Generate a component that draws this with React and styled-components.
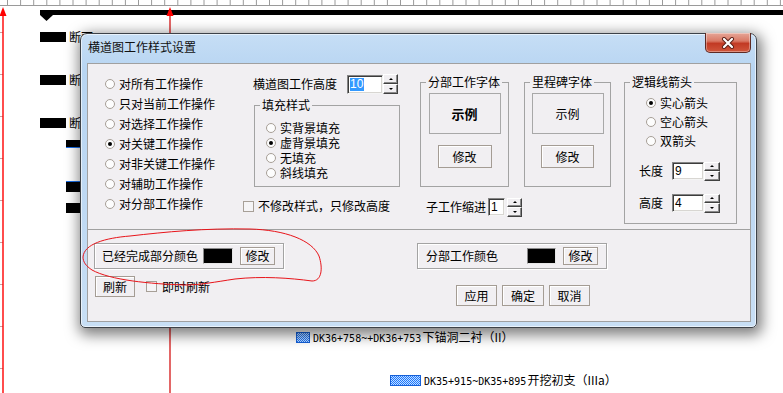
import React from 'react';
import styled, { createGlobalStyle } from 'styled-components';

const GlobalStyle = createGlobalStyle`
  html, body {
    margin: 0;
    padding: 0;
    background: #fff;
  }
  body {
    font-family: "Noto Sans CJK SC", "Liberation Sans", sans-serif;
    font-size: 12px;
    color: #000;
  }
  * {
    box-sizing: border-box;
  }
`;

const Screen = styled.div`
  position: relative;
  width: 783px;
  height: 393px;
  overflow: hidden;
  background: #fff;
`;

const Chart = styled.svg`
  display: block;
`;

const Annotation = styled.svg`
  position: absolute;
  left: 0;
  top: 0;
  pointer-events: none;
`;

// window frame
const Dialog = styled.div`
  position: absolute;
  left: 80px;
  top: 33px;
  width: 677px;
  height: 295px;
  padding: 0 5px 5px 6px;
  border: 1px solid #3d4248;
  border-radius: 7px 7px 5px 5px;
  background: linear-gradient(180deg, #c6def5 0%, #b8d5f2 12%, #bfd9f3 60%, #c8dff5 100%);
  box-shadow: inset 0 0 0 1px rgba(255, 255, 255, 0.6), 2px 4px 14px 3px rgba(0, 0, 0, 0.5);
  display: flex;
  flex-direction: column;
`;

const TitleBar = styled.div`
  height: 29px;
  display: flex;
  align-items: flex-start;
  justify-content: space-between;
`;

const Title = styled.div`
  margin: 6px 0 0 1px;
  line-height: 14px;
  font-size: 12px;
  color: #111;
`;

const CloseButton = styled.div`
  margin-top: -1px;
  width: 46px;
  height: 20px;
  border: 1px solid #5e2a24;
  border-top: none;
  border-radius: 0 0 5px 5px;
  background: linear-gradient(180deg, #e6a697 0%, #da7a66 42%, #c23a24 55%, #d0563c 100%);
  box-shadow: inset 0 0 0 1px rgba(255, 255, 255, 0.35);
  display: flex;
  align-items: center;
  justify-content: center;
`;

const Client = styled.div`
  flex: 1;
  border: 1px solid #a0a0a0;
  background: #f1eff2;
  display: flex;
  flex-direction: column;
`;

const TopPanel = styled.div`
  height: 166px;
  border-bottom: 1px solid #a0a0a0;
  display: flex;
  align-items: flex-start;
`;

const ScopeList = styled.div`
  width: 155px;
  padding: 10px 0 0 17px;
  display: flex;
  flex-direction: column;
`;

const Column = styled.div`
  width: ${p => p.$w}px;
  margin-left: ${p => p.$ml || 0}px;
  padding-top: ${p => p.$pt || 0}px;
  display: flex;
  flex-direction: column;
  align-items: flex-start;
`;

const Row = styled.div`
  height: ${p => p.$h}px;
  margin: ${p => p.$mt || 0}px 0 0 ${p => p.$ml || 0}px;
  display: flex;
  align-items: ${p => p.$top ? 'flex-start' : 'center'};
  gap: ${p => p.$gap || 0}px;
  line-height: 14px;
  white-space: nowrap;
`;

const RadioRow = styled.div`
  height: ${p => p.$h}px;
  margin-left: ${p => p.$ml || 0}px;
  display: flex;
  align-items: center;
  gap: 4px;
  line-height: 14px;
  white-space: nowrap;
`;

const RadioDot = styled.span`
  flex: none;
  width: 10px;
  height: 10px;
  border-radius: 50%;
  border: 1px solid #a79f97;
  background: #fdfdfd;
  display: flex;
  align-items: center;
  justify-content: center;
  &::after {
    content: '';
    width: 4px;
    height: 4px;
    border-radius: 50%;
    background: #000;
    display: ${p => (p.$checked ? 'block' : 'none')};
  }
`;

const CheckBox = styled.span`
  flex: none;
  width: 11px;
  height: 11px;
  margin-left: ${p => p.$ml || 0}px;
  border: 1px solid #a79f97;
  background: #f5f4f6;
`;

const Caption = styled.span`
  margin-left: ${p => p.$ml || 0}px;
`;

const Group = styled.fieldset`
  margin: ${p => p.$mt || 0}px 0 0 ${p => p.$ml || 0}px;
  padding: 0;
  min-width: 0;
  width: ${p => p.$w}px;
  height: ${p => p.$h}px;
  border: 1px solid #a3a3a3;
  display: flex;
  flex-direction: column;
  align-items: ${p => p.$align || 'stretch'};
`;

const Legend = styled.legend`
  margin-left: 5px;
  padding: 0 2px;
  line-height: 14px;
  font-size: 12px;
`;

const GroupBody = styled.div`
  padding: ${p => p.$pad};
  display: flex;
  flex-direction: column;
  align-items: flex-start;
`;

const Sample = styled.div`
  margin-top: 4px;
  width: 72px;
  height: 41px;
  border: 1px solid #a8a8a8;
  display: flex;
  align-items: center;
  justify-content: center;
  font-weight: ${p => (p.$bold ? 700 : 400)};
  font-size: ${p => (p.$bold ? 13 : 12)}px;
`;

const Button = styled.div`
  flex: none;
  width: ${p => p.$w}px;
  height: ${p => p.$h}px;
  margin: ${p => p.$mt || 0}px 0 0 ${p => p.$ml || 0}px;
  border: 1px solid #a49c94;
  box-shadow: inset 1px 1px 0 #fff;
  background: #f1eff2;
  display: flex;
  align-items: center;
  justify-content: center;
  line-height: 14px;
`;

const SpinInput = styled.div`
  flex: none;
  width: ${p => p.$w}px;
  height: ${p => p.$h}px;
  margin-left: ${p => p.$ml || 0}px;
  padding-left: 2px;
  background: #fff;
  border: 1px solid;
  border-color: #858585 #f4f4f4 #f4f4f4 #858585;
  box-shadow: inset 1px 1px 0 #3c3c3c, inset -1px -1px 0 #d8d6d2;
  display: flex;
  align-items: center;
  font-family: "Liberation Sans", sans-serif;
  font-size: 12px;
`;

const Selected = styled.span`
  background: #3399ff;
  color: #fff;
  line-height: 13px;
  padding: 0 1px 0 0;
`;

const Spinner = styled.div`
  flex: none;
  width: ${p => p.$w}px;
  height: ${p => p.$h}px;
  display: flex;
  flex-direction: column;
`;

const SpinHalf = styled.div`
  flex: 1;
  background: #f1eff2;
  border: 1px solid;
  border-color: #fff #404040 #404040 #fff;
  box-shadow: inset -1px -1px 0 #8a8a8a;
  display: flex;
  align-items: center;
  justify-content: center;
  &::after {
    content: '';
    border-left: 2px solid transparent;
    border-right: 2px solid transparent;
    ${p => (p.$down ? 'border-top: 2px solid #000;' : 'border-bottom: 2px solid #000;')}
  }
`;

const BottomPanel = styled.div`
  flex: 1;
  display: flex;
  align-items: flex-start;
  padding: 13px 0 0 6px;
`;

const ColorBox = styled.div`
  width: 190px;
  height: 26px;
  border: 1px solid #a3a3a3;
  box-shadow: inset 1px 1px 0 #fff, 1px 1px 0 #fff;
  padding-left: ${p => p.$pl}px;
  display: flex;
  align-items: center;
  line-height: 14px;
  white-space: nowrap;
`;

const Swatch = styled.div`
  flex: none;
  width: ${p => p.$w}px;
  height: 16px;
  margin: 0 7px 0 ${p => p.$ml}px;
  background: #000;
  border: 1px solid;
  border-color: #8a8a8a #e6e6e6 #e6e6e6 #8a8a8a;
`;

const scopes = [
  '对所有工作操作',
  '只对当前工作操作',
  '对选择工作操作',
  '对关键工作操作',
  '对非关键工作操作',
  '对辅助工作操作',
  '对分部工作操作',
];

const fills = ['实背景填充', '虚背景填充', '无填充', '斜线填充'];
const arrows = ['实心箭头', '空心箭头', '双箭头'];

const Spin = ({ w, h }) => (
  <Spinner $w={w} $h={h}>
    <SpinHalf />
    <SpinHalf $down />
  </Spinner>
);

const ticks = Array.from({ length: 60 }, (_, i) => 7.5 + i * 13.1);
const sideTicks = [32, 74, 116, 158, 200, 242, 284, 326, 368];

// gantt bar label: half-width latin at ~6px per char like the bitmap font
const BarLabel = ({ x, y, code, name }) => (
  <g>
    <text x={x} y={y} fontFamily="DejaVu Sans Mono" fontSize="10">
      {code}
    </text>
    <text x={x + code.length * 6.03 + 1} y={y} fontFamily="Noto Sans CJK SC" fontSize="12">
      {name}
    </text>
  </g>
);

const GanttBackdrop = () => (
  <Chart width="783" height="393" viewBox="0 0 783 393">
    <defs>
      <pattern id="hatch" width="2" height="2" patternUnits="userSpaceOnUse">
        <rect width="2" height="2" fill="#c4ddff" />
        <rect width="1" height="1" fill="#1a78ff" />
        <rect x="1" y="1" width="1" height="1" fill="#1a78ff" />
      </pattern>
    </defs>
    {ticks.map(x => (
      <line key={x} x1={x} y1="0" x2={x} y2="5" stroke="#9a9a9a" />
    ))}
    <line x1="0" y1="5.5" x2="783" y2="5.5" stroke="#9a9a9a" />
    {sideTicks.map(y => (
      <line key={y} x1="0" y1={y + 0.5} x2="3" y2={y + 0.5} stroke="#c8a0a0" />
    ))}
    <rect x="40" y="10" width="743" height="5" fill="#000" />
    <polygon points="40,15 53,15 46.5,21" fill="#000" />

    <line x1="3" y1="14" x2="3" y2="393" stroke="#ff0000" strokeWidth="1.4" />
    <polygon points="3,7 -0.5,16 6.5,16" fill="#ff0000" />
    <line x1="170" y1="14" x2="170" y2="393" stroke="#d00000" strokeWidth="1.2" />
    <polygon points="170,7 166.5,16 173.5,16" fill="#ff0000" />

    {[32, 75, 118].map(y => (
      <g key={y}>
        <rect x="40" y={y} width="26" height="10" fill="#000" />
        <text x="69" y={y + 10} fontFamily="Noto Sans CJK SC" fontSize="12">断面</text>
      </g>
    ))}
    <rect x="66" y="140" width="16" height="7" fill="#000" />
    <rect x="66" y="147" width="16" height="1" fill="#1a6fe8" />
    <rect x="66" y="181" width="16" height="1" fill="#1a6fe8" />
    <rect x="66" y="182" width="16" height="10" fill="#000" />
    <rect x="66" y="203" width="16" height="10" fill="#000" />

    <rect x="296.5" y="332.5" width="13" height="10" fill="url(#hatch)" stroke="#1560d8" />
    <BarLabel x={313} y={341.5} code="DK36+758~+DK36+753" name="下锚洞二衬（II）" />
    <rect x="390.5" y="375.5" width="30" height="10" fill="url(#hatch)" stroke="#1560d8" />
    <BarLabel x={424} y={384.5} code="DK35+915~DK35+895" name="开挖初支（IIIa）" />
  </Chart>
);

export default function App() {
  return (
    <>
      <GlobalStyle />
      <Screen>
        <GanttBackdrop />
        <Dialog>
          <TitleBar>
            <Title>横道图工作样式设置</Title>
            <CloseButton>
              <svg width="14" height="12" viewBox="0 0 14 12">
                <path d="M3 2 L11 10 M11 2 L3 10" stroke="#5a1d14" strokeWidth="4" strokeLinecap="round" />
                <path d="M3 2 L11 10 M11 2 L3 10" stroke="#fff" strokeWidth="2.2" strokeLinecap="round" />
              </svg>
            </CloseButton>
          </TitleBar>
          <Client>
            <TopPanel>
              <ScopeList>
                {scopes.map((s, i) => (
                  <RadioRow key={s} $h={20}>
                    <RadioDot $checked={i === 3} />
                    {s}
                  </RadioRow>
                ))}
              </ScopeList>

              <Column $w={177} $pt={10}>
                <Row $h={20} $ml={10}>
                  横道图工作高度
                  <SpinInput $w={36} $h={19} $ml={10}>
                    <Selected>10</Selected>
                  </SpinInput>
                  <Spin w={15} h={20} />
                </Row>
                <Group $ml={11} $mt={4} $w={146} $h={89}>
                  <Legend>填充样式</Legend>
                  <GroupBody $pad="8px 0 0 11px">
                    {fills.map((f, i) => (
                      <RadioRow key={f} $h={15}>
                        <RadioDot $checked={i === 1} />
                        {f}
                      </RadioRow>
                    ))}
                  </GroupBody>
                </Group>
                <Row $h={14} $mt={12} $gap={4}>
                  <CheckBox />
                  不修改样式，只修改高度
                </Row>
              </Column>

              <Column $w={191} $pt={11}>
                <Row $h={112} $gap={15} $top>
                  <Group $w={89} $h={112} $align="center">
                    <Legend>分部工作字体</Legend>
                    <Sample $bold>示例</Sample>
                    <Button $w={54} $h={23} $mt={11}>修改</Button>
                  </Group>
                  <Group $w={87} $h={112} $align="center">
                    <Legend>里程碑字体</Legend>
                    <Sample>示例</Sample>
                    <Button $w={53} $h={23} $mt={11}>修改</Button>
                  </Group>
                </Row>
                <Row $h={18} $mt={11} $ml={6} $gap={2}>
                  子工作缩进
                  <SpinInput $w={17} $h={18}>1</SpinInput>
                  <Spin w={15} h={19} />
                </Row>
              </Column>

              <Column $w={113} $ml={13} $pt={11}>
                <Group $w={113} $h={149}>
                  <Legend>逻辑线箭头</Legend>
                  <GroupBody $pad="4px 0 0 14px">
                    {arrows.map((a, i) => (
                      <RadioRow key={a} $h={19} $ml={7}>
                        <RadioDot $checked={i === 0} />
                        {a}
                      </RadioRow>
                    ))}
                    <Row $h={18} $mt={12}>
                      长度
                      <SpinInput $w={32} $h={18} $ml={9}>9</SpinInput>
                      <Spin w={16} h={19} />
                    </Row>
                    <Row $h={18} $mt={14}>
                      高度
                      <SpinInput $w={32} $h={18} $ml={9}>4</SpinInput>
                      <Spin w={16} h={19} />
                    </Row>
                  </GroupBody>
                </Group>
              </Column>
            </TopPanel>

            <BottomPanel>
              <Column $w={190}>
                <ColorBox $pl={7}>
                  已经完成部分颜色
                  <Swatch $w={30} $ml={5} />
                  <Button $w={35} $h={18}>修改</Button>
                </ColorBox>
                <Row $h={21} $mt={7} $ml={1}>
                  <Button $w={40} $h={21}>刷新</Button>
                  <CheckBox $ml={11} />
                  <Caption $ml={5}>即时刷新</Caption>
                </Row>
              </Column>
              <Column $w={190} $ml={133}>
                <ColorBox $pl={8}>
                  分部工作颜色
                  <Swatch $w={29} $ml={29} />
                  <Button $w={35} $h={18}>修改</Button>
                </ColorBox>
                <Row $h={21} $mt={16} $ml={39} $gap={5}>
                  <Button $w={41} $h={21}>应用</Button>
                  <Button $w={42} $h={21}>确定</Button>
                  <Button $w={41} $h={21}>取消</Button>
                </Row>
              </Column>
            </BottomPanel>
          </Client>
        </Dialog>
        <Annotation width="783" height="393" viewBox="0 0 783 393">
          <path
            d="M83 257 C84 244 105 238 130 236 C165 232 205 228 250 229 C285 230 312 240 319 256 C323 268 322 281 312 281 C290 278 262 276 235 279 C215 282 200 285 185 285 C150 284 110 280 92 270 C86 266 83 262 83 257 Z"
            fill="none"
            stroke="#e8141a"
            strokeWidth="1"
          />
        </Annotation>
      </Screen>
    </>
  );
}
